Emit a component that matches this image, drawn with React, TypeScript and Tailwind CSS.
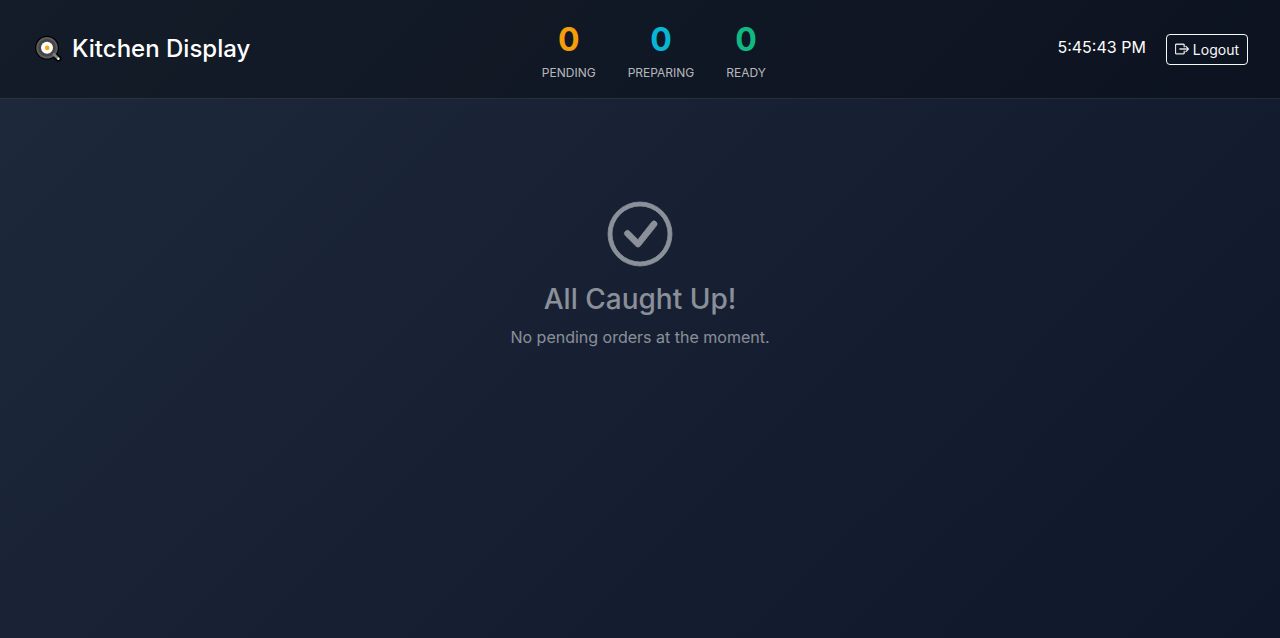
import { BsBoxArrowRight, BsCheckCircle } from "react-icons/bs";

type Stat = { label: string; value: number; color: string };

const stats: Stat[] = [
  { label: "PENDING", value: 0, color: "text-[#f59e0b]" },
  { label: "PREPARING", value: 0, color: "text-[#06b6d4]" },
  { label: "READY", value: 0, color: "text-[#10b981]" },
];

function PanIcon() {
  return (
    <svg viewBox="0 0 32 32" className="size-8" aria-hidden="true">
      <path d="M22 21.6 L26.4 25.6" stroke="#000" strokeWidth="6" strokeLinecap="round" />
      <circle cx="15" cy="14.8" r="12" fill="#000" />
      <circle cx="15" cy="14.8" r="10.8" fill="#5c5c5c" />
      <circle cx="15" cy="14.8" r="8.8" fill="#454545" />
      <path d="M22 21.4 L26.2 25.6" stroke="#808080" strokeWidth="2.8" strokeLinecap="round" />
      <circle cx="26.4" cy="25.8" r="1.2" fill="#f0f0f0" />
      <circle cx="15" cy="14.8" r="6" fill="#fff" />
      <circle cx="15.2" cy="14.9" r="2.3" fill="#fbab0c" />
    </svg>
  );
}

function Header() {
  return (
    <header className="flex items-center justify-between border-b border-white/10 bg-black/30 px-8 py-4">
      <h1 className="flex items-center gap-2 text-2xl font-medium">
        <PanIcon />
        Kitchen Display
      </h1>
      <dl className="flex gap-8 text-center">
        {stats.map((stat) => (
          <div key={stat.label} className="flex flex-col-reverse">
            <dt className="text-xs leading-[18px] text-white/70">{stat.label}</dt>
            <dd className={`text-[32px] leading-[48px] font-bold ${stat.color}`}>{stat.value}</dd>
          </div>
        ))}
      </dl>
      <div className="flex items-start gap-5">
        <time className="leading-[26px]">5:45:43 PM</time>
        <button
          type="button"
          className="flex items-center gap-1 rounded border border-[#f8f9fa] px-2 py-1 text-sm leading-[21px] text-[#f8f9fa]"
        >
          <BsBoxArrowRight className="stroke-[0.4]" aria-hidden="true" />
          Logout
        </button>
      </div>
    </header>
  );
}

export default function App() {
  return (
    <div className="min-h-screen bg-[linear-gradient(135deg,#1e293b_0%,#0f172a_100%)] font-['Inter',sans-serif] text-base text-white">
      <Header />
      <main className="flex flex-col items-center px-6 pt-[103px] pb-16 text-center text-white/50">
        <BsCheckCircle
          className="size-16 overflow-visible stroke-[0.2] text-white opacity-50"
          aria-hidden="true"
        />
        <h2 className="mt-4 mb-2 text-[28px] leading-[34px] font-medium">All Caught Up!</h2>
        <p className="leading-[26px]">No pending orders at the moment.</p>
      </main>
    </div>
  );
}
